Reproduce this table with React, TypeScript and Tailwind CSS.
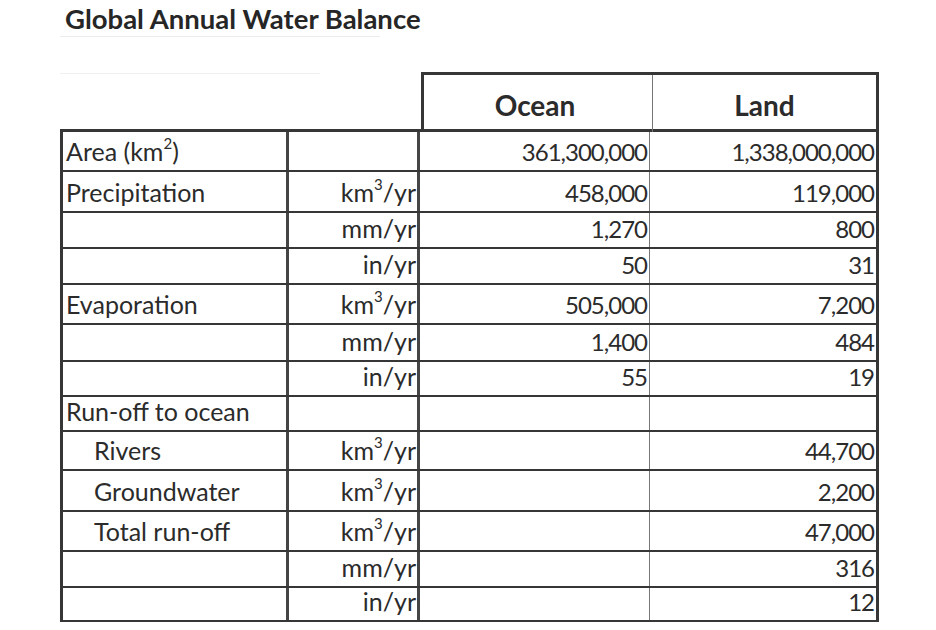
import React from "react";

type Row = {
  label: React.ReactNode;
  indent?: boolean;
  unit: "" | "km3" | "mm" | "in";
  ocean: string;
  land: string;
  h: string;
};

const Sup = ({ c }: { c: string }) => (
  <sup className="text-[15px] relative -top-[3px] align-super">{c}</sup>
);

const rows: Row[] = [
  { label: <span>Area (km<Sup c="2" />)</span>, unit: "", ocean: "361,300,000", land: "1,338,000,000", h: "h-[40px]" },
  { label: <span>Precipitation</span>, unit: "km3", ocean: "458,000", land: "119,000", h: "h-[41px]" },
  { label: "", unit: "mm", ocean: "1,270", land: "800", h: "h-[36px]" },
  { label: "", unit: "in", ocean: "50", land: "31", h: "h-[36px]" },
  { label: <span>Evaporation</span>, unit: "km3", ocean: "505,000", land: "7,200", h: "h-[40px]" },
  { label: "", unit: "mm", ocean: "1,400", land: "484", h: "h-[37px]" },
  { label: "", unit: "in", ocean: "55", land: "19", h: "h-[35px]" },
  { label: <span>Run-off to ocean</span>, unit: "", ocean: "", land: "", h: "h-[35px]" },
  { label: <span>Rivers</span>, indent: true, unit: "km3", ocean: "", land: "44,700", h: "h-[39px]" },
  { label: <span>Groundwater</span>, indent: true, unit: "km3", ocean: "", land: "2,200", h: "h-[41px]" },
  { label: <span>Total run-off</span>, indent: true, unit: "km3", ocean: "", land: "47,000", h: "h-[40px]" },
  { label: "", unit: "mm", ocean: "", land: "316", h: "h-[36px]" },
  { label: "", unit: "in", ocean: "", land: "12", h: "h-[34px]" },
];

function Unit({ u }: { u: Row["unit"] }) {
  if (u === "km3")
    return (
      <span>
        km<Sup c="3" />/yr
      </span>
    );
  if (u === "mm") return <span>mm/yr</span>;
  if (u === "in") return <span>in/yr</span>;
  return null;
}

export default function App() {
  return (
    <div
      className="w-[936px] h-[630px] bg-white text-[#2b2b2b] overflow-hidden relative"
      style={{ fontFamily: "Lato, 'Open Sans', sans-serif" }}
    >
      {/* faint scan remnants */}
      <div className="absolute left-[60px] top-[36px] w-[320px] h-px bg-[#ececec]" />
      <div className="absolute left-[60px] top-[73px] w-[260px] h-px bg-[#f0f0f0]" />

      <div className="pl-[65px] pt-[3px] h-[72px]">
        <h1 className="text-[27.5px] font-bold leading-[32px] text-[#262626]">
          Global Annual Water Balance
        </h1>
      </div>

      <div className="flex pl-[421px]">
        <div className="flex w-[458px] h-[60px] border-t-[3px] border-l-[3px] border-r-[3px] border-[#363636]">
          <div className="w-[229px] border-r border-[#777] flex items-center justify-center text-[28px] font-bold pt-[2px] pr-[6px]">
            Ocean
          </div>
          <div className="flex-1 flex items-center justify-center text-[28px] font-bold pt-[2px]">
            Land
          </div>
        </div>
      </div>

      <div className="ml-[60px] w-[819px] border-t-[3px] border-l-[3px] border-r-[3px] border-[#363636] -mt-[3px]">
        {rows.map((r, i) => (
          <div
            key={i}
            className={`flex ${r.h} border-b-2 border-[#363636] leading-none`}
          >
            <div
              className={`w-[226px] border-r-[3px] border-[#454545] flex items-end pb-[6px] text-[25px] ${
                r.indent ? "pl-[31px]" : "pl-[3px]"
              }`}
            >
              {r.label}
            </div>
            <div className="w-[131px] border-r-[3px] border-[#454545] flex items-end justify-end pb-[6px] pr-[1px] text-[25px]">
              <Unit u={r.unit} />
            </div>
            <div className="w-[230px] border-r border-[#777] flex items-end justify-end pb-[6px] pr-[2px] text-[24px] tracking-[-1px]">
              {r.ocean}
            </div>
            <div className="flex-1 flex items-end justify-end pb-[6px] pr-[2px] text-[24px] tracking-[-1px]">
              {r.land}
            </div>
          </div>
        ))}
      </div>
    </div>
  );
}
